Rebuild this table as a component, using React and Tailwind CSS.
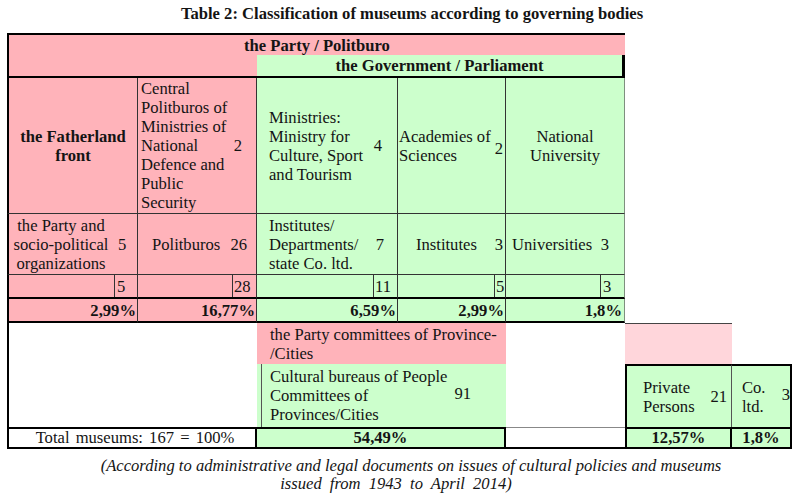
export default function App() {
  return (
    <div className="w-[800px] h-[494px] bg-white text-[#141414] [font-family:'Liberation_Serif',serif] text-[16.6px] leading-[19px] overflow-hidden">
      <div className="h-[33px] pt-[4px] pl-[24px] text-center font-bold">
        Table 2: Classification of museums according to governing bodies
      </div>
      <div className="ml-[7px] grid grid-cols-[131px_119px_141px_108px_119px_107px_60px] grid-rows-[22px_23px_136px_61px_24px_24px_41px_63px_22px]">
        {/* row 1 */}
        <div className="col-start-1 col-span-5 row-start-1 bg-[#ffb3ba] border-t-2 border-l-2 border-t-black border-l-black flex items-center justify-center font-bold">
          the Party / Politburo
        </div>
        {/* row 2 */}
        <div className="col-start-1 col-span-2 row-start-2 bg-[#ffb3ba] border-l-2 border-b-2 border-l-black border-b-black"></div>
        <div className="col-start-3 col-span-3 row-start-2 bg-[#ccffcc] border-r-[3px] border-b-2 border-r-black border-b-black flex items-center justify-center font-bold">
          the Government / Parliament
        </div>

        {/* row 3 */}
        <div className="col-start-1 row-start-3 bg-[#ffb3ba] border-l-2 border-r border-b border-l-black border-r-[#333] border-b-[#333] flex items-center justify-center text-center font-bold">
          <div>the Fatherland<br />front</div>
        </div>
        <div className="col-start-2 row-start-3 bg-[#ffb3ba] border-r border-b border-r-[#333] border-b-[#333] flex items-center pl-[3px]">
          <div>Central<br />Politburos of<br />Ministries of<br />National<br />Defence and<br />Public<br />Security</div>
          <div className="ml-auto mr-[14px]">2</div>
        </div>
        <div className="col-start-3 row-start-3 bg-[#ccffcc] border-r border-b border-r-[#333] border-b-[#333] flex items-center pl-[12px]">
          <div>Ministries:<br />Ministry for<br />Culture, Sport<br />and Tourism</div>
          <div className="ml-auto mr-[15px]">4</div>
        </div>
        <div className="col-start-4 row-start-3 bg-[#ccffcc] border-r border-b border-r-[#333] border-b-[#333] flex items-center pl-[1px]">
          <div>Academies of<br />Sciences</div>
          <div className="ml-auto mr-[2px] pt-[6px]">2</div>
        </div>
        <div className="col-start-5 row-start-3 bg-[#ccffcc] border-r border-b border-r-[#7f8f7f] border-b-[#333] flex items-center justify-center text-center">
          <div>National<br />University</div>
        </div>

        {/* row 4 */}
        <div className="col-start-1 row-start-4 bg-[#ffb3ba] border-l-2 border-r border-b border-l-black border-r-[#333] border-b-[#333] flex items-center">
          <div className="w-[104px] text-center">the Party and<br />socio-political<br />organizations</div>
          <div className="ml-[5px]">5</div>
        </div>
        <div className="col-start-2 row-start-4 bg-[#ffb3ba] border-r border-b border-r-[#333] border-b-[#333] flex items-center pl-[14px]">
          <div>Politburos</div>
          <div className="ml-auto mr-[9px]">26</div>
        </div>
        <div className="col-start-3 row-start-4 bg-[#ccffcc] border-r border-b border-r-[#333] border-b-[#333] flex items-center pl-[12px]">
          <div>Institutes/<br />Departments/<br />state Co. ltd.</div>
          <div className="ml-auto mr-[13px]">7</div>
        </div>
        <div className="col-start-4 row-start-4 bg-[#ccffcc] border-r border-b border-r-[#333] border-b-[#333] flex items-center pl-[18px]">
          <div>Institutes</div>
          <div className="ml-auto mr-[2px]">3</div>
        </div>
        <div className="col-start-5 row-start-4 bg-[#ccffcc] border-r border-b border-r-[#7f8f7f] border-b-[#333] flex items-center pl-[6px]">
          <div>Universities</div>
          <div className="ml-auto mr-[15px]">3</div>
        </div>

        {/* row 5 */}
        <div className="col-start-1 row-start-5 bg-[#ffb3ba] border-l-2 border-r border-b-2 border-l-black border-r-[#333] border-b-black flex justify-end">
          <div className="w-[23px] border-l border-l-[#333] pl-[2px] flex items-center">5</div>
        </div>
        <div className="col-start-2 row-start-5 bg-[#ffb3ba] border-r border-b-2 border-r-[#333] border-b-black flex justify-end">
          <div className="w-[24px] border-l border-l-[#333] pl-[1px] flex items-center">28</div>
        </div>
        <div className="col-start-3 row-start-5 bg-[#ccffcc] border-r border-b-2 border-r-[#333] border-b-black flex justify-end">
          <div className="w-[24px] border-l border-l-[#333] pl-[1px] flex items-center">11</div>
        </div>
        <div className="col-start-4 row-start-5 bg-[#ccffcc] border-r border-b-2 border-r-[#333] border-b-black flex justify-end">
          <div className="w-[11px] border-l border-l-[#333] pl-[1px] flex items-center">5</div>
        </div>
        <div className="col-start-5 row-start-5 bg-[#ccffcc] border-r border-b-2 border-r-[#7f8f7f] border-b-black flex justify-end">
          <div className="w-[24px] border-l border-l-[#333] pl-[2px] flex items-center">3</div>
        </div>

        {/* row 6 */}
        <div className="col-start-1 row-start-6 bg-[#ffb3ba] border-l-2 border-r border-b-2 border-l-black border-r-[#333] border-b-black flex items-center justify-end pr-[1px] font-bold">2,99%</div>
        <div className="col-start-2 row-start-6 bg-[#ffb3ba] border-r border-b-2 border-r-[#333] border-b-black flex items-center justify-end pr-[1px] font-bold">16,77%</div>
        <div className="col-start-3 row-start-6 bg-[#ccffcc] border-r border-b-2 border-r-[#333] border-b-black flex items-center justify-end pr-[1px] font-bold">6,59%</div>
        <div className="col-start-4 row-start-6 bg-[#ccffcc] border-r border-b-2 border-r-[#333] border-b-black flex items-center justify-end pr-[1px] font-bold">2,99%</div>
        <div className="col-start-5 row-start-6 bg-[#ccffcc] border-r border-b-2 border-r-[#7f8f7f] border-b-black flex items-center justify-end pr-[2px] font-bold">1,8%</div>

        {/* rows 7-8 */}
        <div className="col-start-1 col-span-2 row-start-7 row-span-2 bg-white border-l-2 border-l-black"></div>
        <div className="col-start-3 col-span-2 row-start-7 bg-[#ffb3ba] flex items-center pl-[13px]">
          <div>the Party committees of Province-<br />/Cities</div>
        </div>
        <div className="col-start-5 row-start-7 row-span-2 bg-white"></div>
        <div className="col-start-6 row-start-7 bg-[#ffd6db] border-t border-t-[#444]"></div>
        <div className="col-start-3 col-span-2 row-start-8 bg-[#ccffcc]">
          <div className="h-full ml-[4px] border-l border-l-[#555] flex items-center pl-[8px]">
            <div>Cultural bureaus of People<br />Committees of<br />Provinces/Cities</div>
            <div className="ml-auto mr-[35px] pb-[4px]">91</div>
          </div>
        </div>
        <div className="col-start-6 row-start-8 bg-[#ccffcc] border-t-2 border-l-2 border-r border-t-black border-l-black border-r-[#555] flex items-center pl-[16px]">
          <div>Private<br />Persons</div>
          <div className="ml-auto mr-[4px]">21</div>
        </div>
        <div className="col-start-7 row-start-8 bg-[#ccffcc] border-t-2 border-r-2 border-t-black border-r-black flex items-center pl-[10px]">
          <div>Co.<br />ltd.</div>
          <div className="ml-auto pb-[4px]">3</div>
        </div>

        {/* row 9 */}
        <div className="col-start-1 col-span-2 row-start-9 bg-white border-2 border-black flex items-center justify-center leading-[18px] pl-[6px] [word-spacing:2px]">
          Total museums: 167 = 100%
        </div>
        <div className="col-start-3 col-span-2 row-start-9 bg-[#ccffcc] border-t-2 border-b-2 border-r-2 border-t-black border-b-black border-r-black flex items-center justify-center font-bold leading-[18px]">
          54,49%
        </div>
        <div className="col-start-5 row-start-9 bg-white border-t border-b-2 border-t-[#888] border-b-black"></div>
        <div className="col-start-6 row-start-9 bg-[#ccffcc] border-2 border-black flex items-center justify-center font-bold leading-[18px]">
          12,57%
        </div>
        <div className="col-start-7 row-start-9 bg-[#ccffcc] border-t-2 border-b-2 border-r-2 border-t-black border-b-black border-r-black flex items-center justify-center font-bold leading-[18px]">
          1,8%
        </div>
      </div>
      <div className="mt-[8px] italic leading-[18px] text-center">
        <div className="pl-[22px]">(According to administrative and legal documents on issues of cultural policies and museums</div>
        <div className="pr-[8px] [word-spacing:4px]">issued from 1943 to April 2014)</div>
      </div>
    </div>
  );
}
